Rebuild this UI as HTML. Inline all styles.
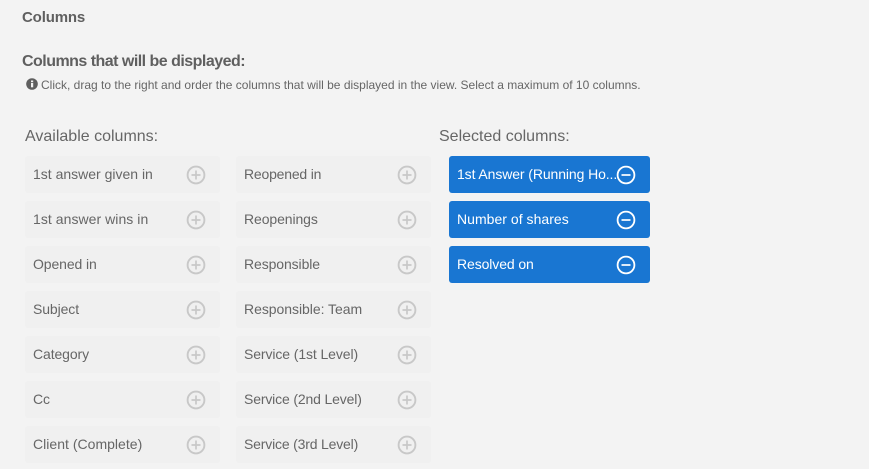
<!DOCTYPE html>
<html><head><meta charset="utf-8"><style>
html,body{margin:0;padding:0;width:869px;height:469px;overflow:hidden;background:#f3f3f3}
body{position:relative;font-family:"Liberation Sans",sans-serif;color:#616161}
.t{position:absolute;white-space:nowrap}
.c{position:absolute;width:195px;height:37px;background:#f0f0f0;border-radius:3px}
.c span{position:absolute;left:8px;top:10px;font-size:14px;line-height:17px;white-space:nowrap;color:#666;letter-spacing:-.1px}
.c svg,.s svg{position:absolute;left:161px;top:9px}
.s{position:absolute;left:449px;width:201px;height:37px;background:#1976d2;border-radius:3px}
.s span{position:absolute;left:8px;top:10px;font-size:14px;line-height:17px;white-space:nowrap;color:#fff;letter-spacing:-.1px}
.s svg{left:167px;top:9px}
</style></head><body>
<svg width="0" height="0" style="position:absolute"><defs>
<symbol id="p" viewBox="0 0 20 20"><circle cx="10" cy="10" r="8.4" fill="none" stroke="#c8c8c8" stroke-width="1.9"/><path d="M5.5 10h9M10 5.5v9" stroke="#c8c8c8" stroke-width="1.7" fill="none"/></symbol>
<symbol id="m" viewBox="0 0 20 20"><circle cx="10" cy="10" r="8.4" fill="none" stroke="#fff" stroke-width="1.8"/><path d="M5.5 10h9" stroke="#fff" stroke-width="1.7" fill="none"/></symbol>
</defs></svg>
<div class="t" style="left:22px;top:9px;font-size:15px;line-height:17px;font-weight:700;color:#5f5f5f;letter-spacing:-.15px">Columns</div>
<div class="t" style="left:22px;top:52px;font-size:16px;line-height:19px;font-weight:700;color:#5f5f5f;letter-spacing:-.52px">Columns that will be displayed:</div>
<svg class="t" style="left:26px;top:78px" width="12" height="12" viewBox="0 0 12 12"><circle cx="6" cy="6" r="5.8" fill="#5f5f5f"/><rect x="5" y="5" width="2.2" height="4.3" fill="#f3f3f3"/><rect x="5" y="2.5" width="2.2" height="1.7" fill="#f3f3f3"/></svg>
<div class="t" style="left:41px;top:78px;font-size:12px;line-height:14px;color:#666">Click, drag to the right and order the columns that will be displayed in the view. Select a maximum of 10 columns.</div>
<div class="t" style="left:25px;top:127px;font-size:16px;line-height:19px;color:#666">Available columns:</div>
<div class="t" style="left:439px;top:127px;font-size:16px;line-height:19px;color:#666">Selected columns:</div>

<div class="c" style="left:25px;top:156px"><span style="letter-spacing:0">1st answer given in</span><svg width="20" height="20"><use href="#p"/></svg></div>
<div class="c" style="left:25px;top:201px"><span style="letter-spacing:.05px">1st answer wins in</span><svg width="20" height="20"><use href="#p"/></svg></div>
<div class="c" style="left:25px;top:246px"><span>Opened in</span><svg width="20" height="20"><use href="#p"/></svg></div>
<div class="c" style="left:25px;top:291px"><span>Subject</span><svg width="20" height="20"><use href="#p"/></svg></div>
<div class="c" style="left:25px;top:336px"><span>Category</span><svg width="20" height="20"><use href="#p"/></svg></div>
<div class="c" style="left:25px;top:381px"><span>Cc</span><svg width="20" height="20"><use href="#p"/></svg></div>
<div class="c" style="left:25px;top:426px"><span style="letter-spacing:.02px">Client (Complete)</span><svg width="20" height="20"><use href="#p"/></svg></div>

<div class="c" style="left:236px;top:156px"><span style="letter-spacing:-.2px">Reopened in</span><svg width="20" height="20"><use href="#p"/></svg></div>
<div class="c" style="left:236px;top:201px"><span>Reopenings</span><svg width="20" height="20"><use href="#p"/></svg></div>
<div class="c" style="left:236px;top:246px"><span>Responsible</span><svg width="20" height="20"><use href="#p"/></svg></div>
<div class="c" style="left:236px;top:291px"><span style="letter-spacing:-.04px">Responsible: Team</span><svg width="20" height="20"><use href="#p"/></svg></div>
<div class="c" style="left:236px;top:336px"><span>Service (1st Level)</span><svg width="20" height="20"><use href="#p"/></svg></div>
<div class="c" style="left:236px;top:381px"><span style="letter-spacing:-.15px">Service (2nd Level)</span><svg width="20" height="20"><use href="#p"/></svg></div>
<div class="c" style="left:236px;top:426px"><span style="letter-spacing:-.18px">Service (3rd Level)</span><svg width="20" height="20"><use href="#p"/></svg></div>

<div class="s" style="top:156px"><span>1st Answer (Running Ho...</span><svg width="20" height="20"><use href="#m"/></svg></div>
<div class="s" style="top:201px"><span style="letter-spacing:.03px">Number of shares</span><svg width="20" height="20"><use href="#m"/></svg></div>
<div class="s" style="top:246px"><span>Resolved on</span><svg width="20" height="20"><use href="#m"/></svg></div>
</body></html>
